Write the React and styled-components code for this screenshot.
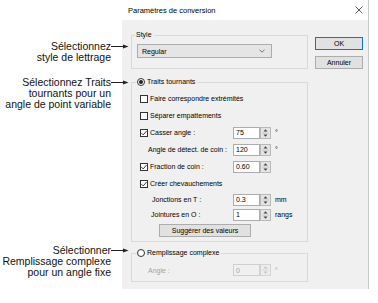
import React from 'react';
import styled, { createGlobalStyle } from 'styled-components';

const Global = createGlobalStyle`
  html, body { margin: 0; padding: 0; background: #fff; }
  body { width: 378px; height: 303px; overflow: hidden; font-family: "Liberation Sans", Arial, sans-serif; }
  * { box-sizing: border-box; }
`;

const Page = styled.div`
  display: flex;
  align-items: flex-start;
  width: 378px;
  height: 303px;
`;

const Notes = styled.div`
  width: 122px;
  flex: none;
  position: relative;
  z-index: 2;
`;

const Callout = styled.div`
  position: relative;
  width: 111px;
  margin-top: ${p => p.$gap}px;
  text-align: right;
  font-size: 10.5px;
  line-height: 11px;
  color: #111;
  white-space: nowrap;
`;

const ArrowMark = styled.svg`
  position: absolute;
  left: 111px;
  top: 3px;
`;

const Arrow = () => (
  <ArrowMark width="18" height="5" viewBox="0 0 18 5">
    <line x1="0" y1="2.5" x2="13" y2="2.5" stroke="#222" strokeWidth="1" />
    <path d="M12 0.5 L17.5 2.5 L12 4.5 Z" fill="#222" />
  </ArrowMark>
);

const Dialog = styled.div`
  width: 247px;
  flex: none;
  border-right: 1px solid #c9c9c9;
  font-size: 7px;
  color: #000;
`;

const TitleBar = styled.div`
  height: 20px;
  display: flex;
  align-items: center;
  justify-content: space-between;
  padding: 0 5px 0 6px;
  background: #fff;
  font-size: 7.5px;
`;

const Body = styled.div`
  background: #f0f0f0;
  height: 269px;
  display: flex;
  align-items: flex-start;
  gap: 7px;
  padding: 10px 5px 0 9px;
`;

const Main = styled.div`
  width: 177px;
  display: flex;
  flex-direction: column;
`;

const Buttons = styled.div`
  width: 48px;
  display: flex;
  flex-direction: column;
  gap: 6px;
  margin-top: 7px;
`;

const Button = styled.div`
  height: 13px;
  display: flex;
  align-items: center;
  justify-content: center;
  background: #e1e1e1;
  border: 1px solid ${p => (p.$default ? '#0078d7' : '#adadad')};
  font-size: 7px;
  width: ${p => (p.$w ? `${p.$w}px` : 'auto')};
  margin-left: ${p => p.$ml || 0}px;
`;

const Group = styled.fieldset`
  margin: ${p => p.$mt || 0}px 0 0 0;
  padding: 0;
  border: 1px solid #d9d9d9;
  min-inline-size: 0;
`;

const Legend = styled.legend`
  margin-left: ${p => p.$ml}px;
  padding: 0 2px 0 ${p => p.$pl || 1}px;
  height: 10px;
  line-height: 10px;
  display: flex;
  align-items: center;
  gap: 2px;
  font-size: 7px;
`;

const Content = styled.div`
  padding: ${p => p.$pad};
  display: flex;
  flex-direction: column;
`;

const Combo = styled.div`
  width: 135px;
  height: 14px;
  margin-left: 5px;
  background: #e5e5e5;
  border: 1px solid #acacac;
  display: flex;
  align-items: center;
  justify-content: space-between;
  padding: 0 6px 0 4px;
`;

const Row = styled.div`
  height: ${p => p.$h || 17}px;
  display: flex;
  align-items: center;
  padding-left: 8px;
  color: ${p => (p.$disabled ? '#a3a3a3' : '#000')};
`;

const Field = styled.div`
  width: 93px;
  flex: none;
  display: flex;
  align-items: center;
  gap: 2px;
  padding-left: ${p => p.$indent || 0}px;
  white-space: nowrap;
`;

const Box = styled.span`
  width: 8px;
  height: 8px;
  flex: none;
  border: 1px solid #333;
  background: #fff;
  display: inline-flex;
  align-items: center;
  justify-content: center;
`;

const Radio = styled.span`
  width: 8px;
  height: 8px;
  flex: none;
  border-radius: 50%;
  border: 1px solid #333;
  background: #fff;
  display: inline-flex;
  align-items: center;
  justify-content: center;
  &::after {
    content: '';
    width: 4px;
    height: 4px;
    border-radius: 50%;
    background: ${p => (p.$on ? '#222' : 'transparent')};
  }
`;

const Label = styled.span`
  white-space: nowrap;
`;

const Input = styled.div`
  width: 27px;
  height: 12px;
  flex: none;
  background: ${p => (p.$disabled ? '#f0f0f0' : '#fff')};
  border: 1px solid ${p => (p.$disabled ? '#cfcfcf' : '#abadb3')};
  color: ${p => (p.$disabled ? '#a3a3a3' : '#000')};
  display: flex;
  align-items: center;
  padding-left: 2px;
`;

const Unit = styled.span`
  margin-left: 4px;
`;

const Check = ({ on }) => (
  <Box>
    {on && (
      <svg width="6" height="6" viewBox="0 0 6 6">
        <path d="M0.4 3.1 L2.2 4.9 L5.6 1" fill="none" stroke="#222" strokeWidth="0.9" />
      </svg>
    )}
  </Box>
);

const Spinner = ({ disabled }) => {
  const c = disabled ? '#c4c4c4' : '#444';
  return (
    <svg width="11" height="12" viewBox="0 0 11 12" style={{ flex: 'none' }}>
      <rect x="0.5" y="0.5" width="10" height="11" fill={disabled ? '#ececec' : '#e4e4e4'} stroke={disabled ? '#d4d4d4' : '#b9b9b9'} />
      <line x1="2" y1="6" x2="9" y2="6" stroke={disabled ? '#d4d4d4' : '#b9b9b9'} strokeWidth="0.6" />
      <path d="M3.5 4.5 L5.5 2.3 L7.5 4.5 Z" fill={c} />
      <path d="M3.5 7.5 L5.5 9.7 L7.5 7.5 Z" fill={c} />
    </svg>
  );
};

const NumField = ({ value, unit, disabled }) => (
  <>
    <Input $disabled={disabled}>{value}</Input>
    <Spinner disabled={disabled} />
    {unit && <Unit>{unit}</Unit>}
  </>
);

export default function App() {
  return (
    <>
      <Global />
      <Page>
        <Notes>
          <Callout $gap={41}>
            Sélectionnez<Arrow />
            <br />style de lettrage
          </Callout>
          <Callout $gap={14}>
            Sélectionnez Traits<Arrow />
            <br />tournants pour un
            <br />angle de point variable
          </Callout>
          <Callout $gap={135}>
            Sélectionner<Arrow />
            <br />Remplissage complexe
            <br />pour un angle fixe
          </Callout>
        </Notes>
        <Dialog>
          <TitleBar>
            <span>Paramètres de conversion</span>
            <svg width="8" height="8" viewBox="0 0 8 8">
              <path d="M0.5 0.5 L7.5 7.5 M7.5 0.5 L0.5 7.5" stroke="#333" strokeWidth="0.8" />
            </svg>
          </TitleBar>
          <Body>
            <Main>
              <Group>
                <Legend $ml={3}>Style</Legend>
                <Content $pad="4px 0 10px 0">
                  <Combo>
                    <span>Regular</span>
                    <svg width="6" height="4" viewBox="0 0 6 4">
                      <path d="M0.5 0.8 L3 3.2 L5.5 0.8" fill="none" stroke="#555" strokeWidth="0.8" />
                    </svg>
                  </Combo>
                </Content>
              </Group>

              <Group $mt={8}>
                <Legend $ml={4} $pl={1}>
                  <Radio $on />
                  <Label>Traits tournants</Label>
                </Legend>
                <Content $pad="3px 0 4px 0">
                  <Row><Field><Check /><Label>Faire correspondre extrémités</Label></Field></Row>
                  <Row><Field><Check /><Label>Séparer empattements</Label></Field></Row>
                  <Row>
                    <Field><Check on /><Label>Casser angle :</Label></Field>
                    <NumField value="75" unit="°" />
                  </Row>
                  <Row>
                    <Field $indent={8}><Label>Angle de détect. de coin :</Label></Field>
                    <NumField value="120" unit="°" />
                  </Row>
                  <Row>
                    <Field><Check on /><Label>Fraction de coin :</Label></Field>
                    <NumField value="0.60" />
                  </Row>
                  <Row><Field><Check on /><Label>Créer chevauchements</Label></Field></Row>
                  <Row $h={15}>
                    <Field $indent={12}><Label>Jonctions en T :</Label></Field>
                    <NumField value="0.3" unit="mm" />
                  </Row>
                  <Row $h={15}>
                    <Field $indent={11}><Label>Jointures en O :</Label></Field>
                    <NumField value="1" unit="rangs" />
                  </Row>
                  <Button $w={92} $ml={27} style={{ marginTop: 2 }}>Suggérer des valeurs</Button>
                </Content>
              </Group>

              <Group $mt={6}>
                <Legend $ml={4} $pl={1}>
                  <Radio />
                  <Label>Remplissage complexe</Label>
                </Legend>
                <Content $pad="6px 0 5px 0">
                  <Row $h={12} $disabled>
                    <Field $indent={8}><Label>Angle :</Label></Field>
                    <NumField value="0" unit="°" disabled />
                  </Row>
                </Content>
              </Group>
            </Main>
            <Buttons>
              <Button $default>OK</Button>
              <Button>Annuler</Button>
            </Buttons>
          </Body>
        </Dialog>
      </Page>
    </>
  );
}
